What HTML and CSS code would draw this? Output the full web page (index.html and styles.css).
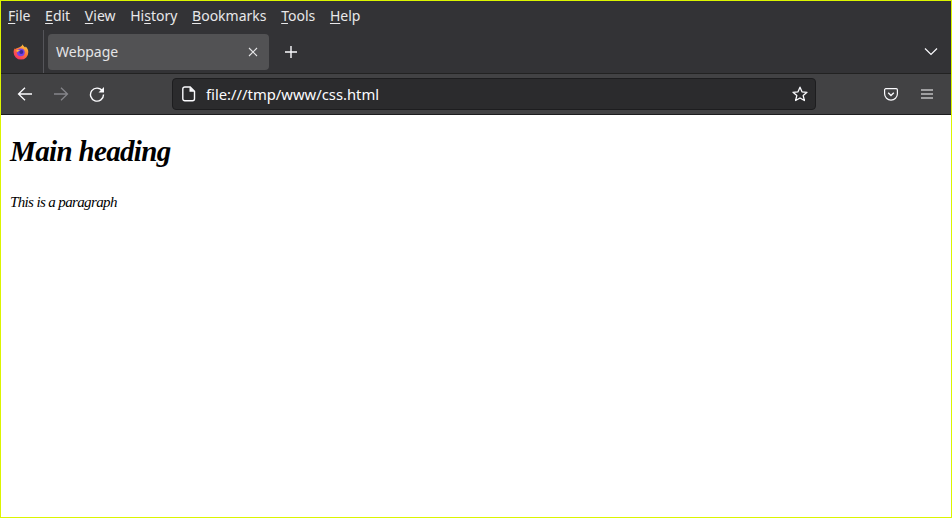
FILE: index.html
```html
<!DOCTYPE html>
<html lang="en">
<head>
<meta charset="utf-8">
<title>Webpage</title>
<link rel="stylesheet" href="styles.css">
</head>
<body>
<div class="window">
  <nav class="menubar">
    <span class="menu"><u>F</u>ile</span>
    <span class="menu"><u>E</u>dit</span>
    <span class="menu"><u>V</u>iew</span>
    <span class="menu">Hi<u>s</u>tory</span>
    <span class="menu"><u>B</u>ookmarks</span>
    <span class="menu"><u>T</u>ools</span>
    <span class="menu"><u>H</u>elp</span>
  </nav>
  <div class="tabbar">
    <div class="fx-slot">
      <svg class="fx" width="16" height="16" viewBox="0 0 16 16">
        <defs>
          <linearGradient id="g1" x1="0.8" y1="0" x2="0.2" y2="1"><stop offset="0" stop-color="#ffd23a"/><stop offset="0.5" stop-color="#ff7139"/><stop offset="1" stop-color="#f5286a"/></linearGradient>
        </defs>
        <path d="M9.6 0.3c.3 1.6 1.5 2.2 2.6 3.1.3-.3.4-.6.5-.9 1.600 1.600 2.600 3.500 2.600 5.600A7.300 7.300 0 0 1 8 15.600 7.400 7.400 0 0 1 .6 8.200c0-1.700.5-3 1.400-4 .1.500.3.800.5 1 .7-1 1.800-1.400 2.800-1.500C6.800 3.100 9.300 2.400 9.600.3z" fill="url(#g1)"/>
        <circle cx="7.800" cy="8.300" r="3.900" fill="#7542e5"/>
        <circle cx="8.300" cy="7.900" r="2" fill="#3a2a9a"/>
        <path d="M3 6.500c1.500-1 3-1 4.500-.2-1.500.3-2.300.8-2.700 1.900-.7-.3-1.300-.9-1.800-1.700z" fill="#ffb33a"/>
      </svg>
    </div>
    <div class="tab">
      <span class="tab-title">Webpage</span>
      <svg class="tab-close" width="10" height="10" viewBox="0 0 10 10"><path d="M1 1l8 8M9 1l-8 8" stroke="#e6e6e8" stroke-width="1.100" fill="none"/></svg>
    </div>
    <svg class="newtab" width="14" height="14" viewBox="0 0 14 14"><path d="M7 1v12M1 7h12" stroke="#fbfbfe" stroke-width="1.400" fill="none"/></svg>
    <span class="spacer"></span>
    <svg class="chevron" width="14" height="9" viewBox="0 0 14 9"><path d="M1 1.500L7 7.500l6-6" stroke="#fbfbfe" stroke-width="1.200" fill="none"/></svg>
  </div>
  <div class="navbar">
    <svg class="btn back" width="16" height="16" viewBox="0 0 16 16"><path d="M15 8H2M8 1.700L1.500 8 8 14.300" stroke="#fbfbfe" stroke-width="1.300" fill="none"/></svg>
    <svg class="btn forward" width="16" height="16" viewBox="0 0 16 16"><path d="M1 8h13M8 1.700L14.500 8 8 14.300" stroke="#85858a" stroke-width="1.300" fill="none"/></svg>
    <svg class="btn reload" width="16" height="16" viewBox="0 0 16 16"><path d="M13.400 5A6.500 6.500 0 1 0 14.500 8.500" stroke="#fbfbfe" stroke-width="1.400" fill="none"/><path d="M15 1v5.500H9.500z" fill="#fbfbfe"/></svg>
    <div class="urlbar">
      <svg class="page-icon" width="14" height="16" viewBox="0 0 14 16"><path d="M2.800 1h5.400L12.500 5.200v7.600a2 2 0 0 1-2 2H2.800a2 2 0 0 1-2-2V3a2 2 0 0 1 2-2z" stroke="#fbfbfe" stroke-width="1.400" fill="none"/><path d="M7.500 1v4.800h5z" fill="#fbfbfe"/></svg>
      <span class="url">file:///tmp/www/css.html</span>
      <span class="spacer"></span>
      <svg class="star" width="16" height="16" viewBox="0 0 16 16"><path d="M8 1.200l2 4.600 5 .5-3.800 3.300 1.200 4.900L8 12l-4.400 2.500 1.200-4.900L1 6.300l5-.5z" stroke="#fbfbfe" stroke-width="1.300" stroke-linejoin="round" fill="none"/></svg>
    </div>
    <svg class="pocket" width="14" height="13" viewBox="0 0 14 13"><path d="M1.800.7h10.400A1.200 1.200 0 0 1 13.400 1.900V5.700a6.400 6.400 0 0 1-12.800 0V1.900A1.200 1.200 0 0 1 1.800.7z" stroke="#fbfbfe" stroke-width="1.200" fill="none"/><path d="M4.200 4.700L7 7.500l2.800-2.800" stroke="#fbfbfe" stroke-width="1.300" fill="none"/></svg>
    <svg class="hamburger" width="12" height="10" viewBox="0 0 12 10"><path d="M0 1h12M0 5h12M0 9h12" stroke="#fbfbfe" stroke-width="1.200" fill="none"/></svg>
  </div>
  <main class="content">
    <h1 class="heading">Main heading</h1>
    <p class="para">This is a paragraph</p>
  </main>
</div>
</body>
</html>
```
FILE: styles.css
```css
html, body { margin: 0; padding: 0; height: 100%; }
body { font-family: "Noto Sans", "Open Sans", sans-serif; }
.window {
  box-sizing: border-box;
  width: 952px;
  height: 518px;
  border: 1px solid #dcf500;
  display: flex;
  flex-direction: column;
  background: #fff;
  overflow: hidden;
}
.menubar {
  height: 29px;
  background: #333336;
  color: #e8e8ea;
  font-size: 14px;
  display: flex;
  align-items: center;
  gap: 14.7px;
  padding-left: 7px;
  flex: none;
}
.menu u { text-underline-offset: 2px; text-decoration-thickness: 1px; }
.tabbar {
  height: 43px;
  background: #333336;
  display: flex;
  align-items: center;
  flex: none;
  border-bottom: 1px solid #222;
}
.fx-slot {
  width: 43px;
  height: 43px;
  box-sizing: border-box;
  border-right: 1px solid #55555a;
  display: flex;
  align-items: center;
  justify-content: flex-start;
  padding-left: 12px;
  flex: none;
}
.tab {
  margin-left: 4px;
  width: 221px;
  height: 36px;
  background: #525254;
  border-radius: 4px;
  color: #e4e4e6;
  font-size: 14px;
  display: flex;
  align-items: center;
  justify-content: space-between;
  padding: 0 11px 0 8px;
  box-sizing: border-box;
  flex: none;
}
.newtab { margin-left: 15px; flex: none; }
.spacer { flex: 1; }
.chevron { margin-right: 13px; flex: none; }
.navbar {
  height: 40px;
  background: #424244;
  border-bottom: 1px solid #1c1c1e;
  display: flex;
  align-items: center;
  flex: none;
}
.back { margin-left: 16px; flex: none; }
.forward { margin-left: 20px; flex: none; }
.reload { margin-left: 20px; flex: none; }
.urlbar {
  margin-left: 67px;
  width: 644px;
  height: 32px;
  box-sizing: border-box;
  background: #2b2b2d;
  border: 1px solid #1d1d1f;
  border-radius: 4px;
  display: flex;
  align-items: center;
  color: #fbfbfe;
  font-size: 14.8px;
  padding: 0 7px 0 9px;
  flex: none;
}
.page-icon { flex: none; }
.url { margin-left: 10px; }
.pocket { margin-left: 68px; flex: none; }
.hamburger { margin-left: 23px; flex: none; }
.content { flex: 1; padding: 0 9px; color: #000; }
.heading {
  font-family: "URW Chancery L", "Z003", "Apple Chancery", "Liberation Serif", cursive;
  font-size: 29px;
  font-weight: bold;
  font-style: italic;
  letter-spacing: -0.65px;
  margin: 18px 0 0;
  line-height: 37px;
}
.para {
  font-family: "URW Chancery L", "Z003", "Apple Chancery", "Liberation Serif", cursive;
  font-size: 15px;
  font-style: italic;
  letter-spacing: -0.63px;
  margin: 23px 0 0;
  line-height: 19px;
}
```
